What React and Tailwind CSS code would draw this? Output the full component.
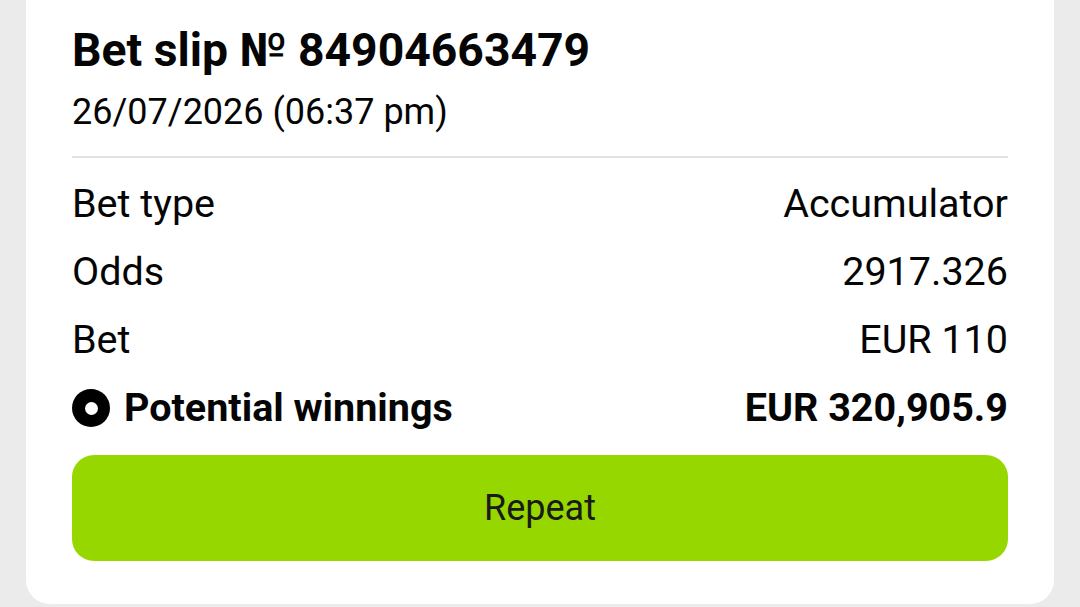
export default function App() {
  const rows = [
    ['Bet type', 'Accumulator'],
    ['Odds', '2917.326'],
    ['Bet', 'EUR 110'],
  ]

  return (
    <div className="w-[1080px] h-[607px] overflow-hidden bg-[#ebebeb] px-[26px]"
      style={{ fontFamily: 'Roboto, "Noto Sans", sans-serif' }}>
      <div className="bg-white rounded-b-[24px] px-[46px] pt-[20px] pb-[43px] text-[#050505]">
        {/* Header */}
        <h1 className="text-[46.3px] leading-[60px] font-bold">Bet slip № 84904663479</h1>
        <p className="mt-[10px] text-[36px] leading-[44px]">26/07/2026 (06:37 pm)</p>
        <div className="mt-[22px] h-[2px] bg-[#e2e2e2]" />

        {/* Details */}
        <div className="mt-[12px]">
          {rows.map(([label, value]) => (
            <div key={label} className="flex items-center justify-between h-[68px] text-[39.5px]">
              <span>{label}</span>
              <span>{value}</span>
            </div>
          ))}
          <div className="flex items-center justify-between h-[68px] text-[39.5px] font-bold">
            <div className="flex items-center gap-[14px]">
              <span className="w-[38px] h-[38px] rounded-full bg-black flex items-center justify-center">
                <span className="w-[13px] h-[13px] rounded-full bg-white" />
              </span>
              <span>Potential winnings</span>
            </div>
            <span>EUR 320,905.9</span>
          </div>
        </div>

        <button className="mt-[13px] w-full h-[106px] rounded-[22px] bg-[#97d700] text-[36px] text-[#1a1a1a]">
          Repeat
        </button>
      </div>
    </div>
  )
}
